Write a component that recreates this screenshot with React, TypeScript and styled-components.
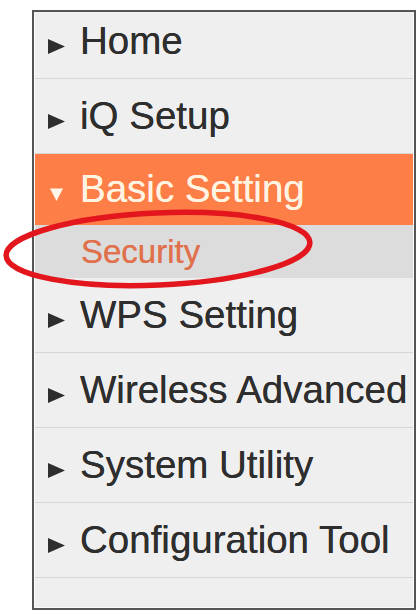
import React from 'react'
import styled, { createGlobalStyle } from 'styled-components'

const GlobalStyle = createGlobalStyle`
  html, body {
    margin: 0;
    padding: 0;
    background: #ffffff;
  }
  body {
    font-family: 'Liberation Sans', Arial, sans-serif;
  }
`

// =============================================================================
// LAYOUT
// =============================================================================

const Page = styled.div`
  position: relative;
  width: 418px;
  height: 612px;
  padding: 10px 0 0 32px;
  box-sizing: border-box;
`

const Frame = styled.nav`
  width: 384px;
  box-sizing: border-box;
  border: 2px solid #555555;
  padding: 1px;
  background: #fbfbfb;
  overflow: hidden;
`

const MenuList = styled.ul`
  list-style: none;
  margin: -9px 0 0;
  padding: 0;
`

// =============================================================================
// MENU ROWS
// =============================================================================

type RowVariant = 'item' | 'open' | 'sub' | 'blank'

const rowHeights: Record<RowVariant, number> = { item: 74, open: 71, sub: 53, blank: 29 }
const rowBackgrounds: Record<RowVariant, string> = {
  item: '#efefef',
  open: '#fe7e48',
  sub: '#dcdcdc',
  blank: '#efefef',
}

const Row = styled.li<{ $variant: RowVariant }>`
  display: flex;
  align-items: center;
  height: ${({ $variant }) => rowHeights[$variant]}px;
  padding-left: ${({ $variant }) => ($variant === 'sub' ? 46 : 13)}px;
  background: ${({ $variant }) => rowBackgrounds[$variant]};
  border-bottom: ${({ $variant }) => ($variant === 'item' ? '1px solid #d6d6d6' : 'none')};
`

const Label = styled.span<{ $variant: RowVariant }>`
  font-size: ${({ $variant }) => ($variant === 'sub' ? 33 : 38.5)}px;
  line-height: 1.15;
  white-space: nowrap;
  color: ${({ $variant }) =>
    $variant === 'open' ? '#fff4e2' : $variant === 'sub' ? '#e0714c' : '#2e2e2e'};
  text-shadow: 0 0 0.6px currentColor;
`

const Caret = styled.svg`
  display: inline-block;
  vertical-align: baseline;
  width: 17px;
  height: 15px;
  margin-right: 15px;
`

const ClosedCaret = () => (
  <Caret viewBox="0 0 17 15">
    <polygon points="0,0 17,7.5 0,15" fill="#2e2e2e" />
  </Caret>
)

const OpenCaret = () => (
  <Caret viewBox="0 0 17 15">
    <polygon points="2,1.5 15,1.5 8.5,14" fill="#fff6ea" />
  </Caret>
)

// red marker ring around the selected sub item
const Highlight = styled.svg`
  position: absolute;
  left: 0;
  top: 205px;
  width: 320px;
  height: 90px;
  pointer-events: none;
`

const menu = [
  { label: 'Home', variant: 'item' as RowVariant },
  { label: 'iQ Setup', variant: 'item' as RowVariant },
  { label: 'Basic Setting', variant: 'open' as RowVariant },
  { label: 'Security', variant: 'sub' as RowVariant },
  { label: 'WPS Setting', variant: 'item' as RowVariant },
  { label: 'Wireless Advanced', variant: 'item' as RowVariant },
  { label: 'System Utility', variant: 'item' as RowVariant },
  { label: 'Configuration Tool', variant: 'item' as RowVariant },
]

export default function App() {
  return (
    <>
      <GlobalStyle />
      <Page>
        <Frame>
          <MenuList>
            {menu.map((entry) => (
              <Row key={entry.label} $variant={entry.variant}>
                <Label $variant={entry.variant}>
                  {entry.variant === 'item' && <ClosedCaret />}
                  {entry.variant === 'open' && <OpenCaret />}
                  {entry.label}
                </Label>
              </Row>
            ))}
            <Row $variant="blank" />
          </MenuList>
        </Frame>
        <Highlight viewBox="0 0 320 90">
          <ellipse
            cx="158"
            cy="44"
            rx="152"
            ry="36"
            transform="rotate(-2.5 158 44)"
            fill="none"
            stroke="#e2161c"
            strokeWidth="5.5"
          />
        </Highlight>
      </Page>
    </>
  )
}
